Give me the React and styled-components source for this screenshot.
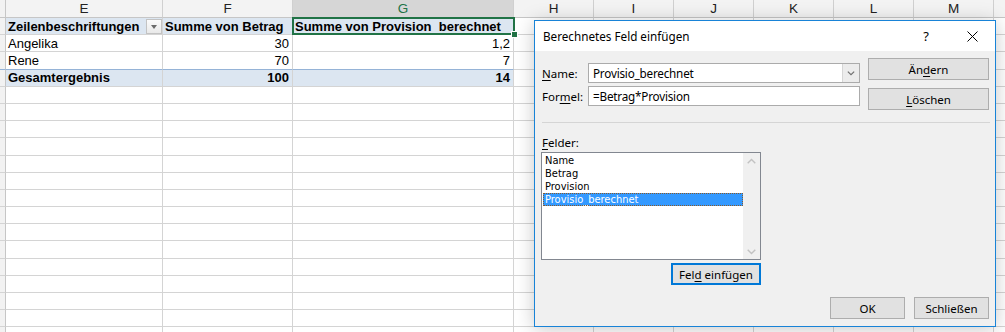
import React from 'react';
import styled, { createGlobalStyle } from 'styled-components';

const GlobalStyle = createGlobalStyle`
  html, body { margin: 0; padding: 0; background: #fff; }
  body { overflow: hidden; }
`;

const Sheet = styled.div`
  position: relative;
  width: 1005px;
  height: 332px;
  overflow: hidden;
  background: #fff;
  font-family: "Liberation Sans", Arial, sans-serif;
`;

const HeaderRow = styled.div`
  display: flex;
  height: 18px;
`;

const Corner = styled.div`
  flex: none;
  width: 6px;
  box-sizing: border-box;
  background: #f2f2f2;
  border-right: 1px solid #c6c6c6;
  border-bottom: 1px solid ${p => (p.$line ? p.$line : '#d4d4d4')};
`;

const ColHeader = styled.div`
  flex: none;
  width: ${p => p.$w}px;
  box-sizing: border-box;
  border-right: 1px solid #d0d0d0;
  border-bottom: 1px solid ${p => (p.$sel ? '#217346' : '#c6c6c6')};
  background: ${p => (p.$sel ? '#d6d6d6' : '#f3f3f3')};
  color: ${p => (p.$sel ? '#217346' : '#222')};
  font-size: 13.5px;
  display: flex;
  align-items: center;
  justify-content: center;
`;

const Row = styled.div`
  display: flex;
  height: 17.2px;
`;

const Cell = styled.div`
  flex: none;
  position: relative;
  width: ${p => p.$w}px;
  height: 100%;
  box-sizing: border-box;
  border-right: 1px solid #d4d4d4;
  border-bottom: 1px solid ${p => p.$line || '#d4d4d4'};
  background: ${p => p.$bg || '#fff'};
  font-weight: ${p => (p.$bold ? 700 : 400)};
  font-size: 13px;
  color: #000;
  display: flex;
  align-items: center;
  justify-content: ${p => (p.$right ? 'flex-end' : 'space-between')};
  padding: 0 3px 0 2px;
  white-space: nowrap;

  ${p =>
    p.$active &&
    `
    &::before {
      content: '';
      position: absolute;
      left: -1px;
      top: -1px;
      right: -2px;
      bottom: -1px;
      border: 2px solid #217346;
      z-index: 2;
      pointer-events: none;
    }
    &::after {
      content: '';
      position: absolute;
      right: -5px;
      bottom: -4px;
      width: 5px;
      height: 5px;
      background: #217346;
      border: 1px solid #fff;
      z-index: 3;
    }
  `}
`;

const CellText = styled.span`
  white-space: pre;
`;

const FilterButton = styled.div`
  flex: none;
  width: 16px;
  height: 15px;
  margin-right: -3px;
  box-sizing: border-box;
  border: 1px solid #c3c3c3;
  background: linear-gradient(#fbfbfb, #e9e9e9);
  display: flex;
  align-items: center;
  justify-content: center;

  &::after {
    content: '';
    border-left: 3.5px solid transparent;
    border-right: 3.5px solid transparent;
    border-top: 4px solid #6b6b6b;
    margin-top: 1px;
  }
`;

/* ---------- Dialog ---------- */

const Dialog = styled.div`
  position: absolute;
  left: 534px;
  top: 20px;
  width: 462px;
  height: 307px;
  box-sizing: border-box;
  border: 1px solid #1883d7;
  background: #f0f0f0;
  box-shadow: 0 2px 18px rgba(0, 0, 0, 0.22);
  display: flex;
  flex-direction: column;
  font-family: "Noto Sans", "Open Sans", sans-serif;
  font-size: 11.5px;
  color: #000;
  z-index: 10;
`;

const TitleBar = styled.div`
  flex: none;
  height: 30px;
  background: #fff;
  display: flex;
  align-items: center;
  padding-left: 8px;
`;

const Title = styled.div`
  flex: 1;
  font-size: 11.7px;
`;

const TitleButton = styled.div`
  width: 46px;
  height: 30px;
  display: flex;
  align-items: center;
  justify-content: center;
  font-size: 13px;
`;

const Body = styled.div`
  flex: 1;
  display: flex;
  flex-direction: column;
  padding: 7px 6px 8px 7px;
`;

const TopRow = styled.div`
  display: flex;
  justify-content: space-between;
`;

const Form = styled.div`
  margin-top: 5px;
  display: grid;
  grid-template-columns: 46px 272px;
  grid-auto-rows: 20px;
  row-gap: 3px;
  align-items: center;
`;

const Label = styled.label``;

const Accel = styled.span`
  text-decoration: underline;
  text-underline-offset: 2px;
`;

const Field = styled.div`
  height: 20px;
  box-sizing: border-box;
  border: 1px solid #ababab;
  background: #fff;
  display: flex;
  align-items: center;
  padding-left: 4px;
  font-size: 11.7px;
  letter-spacing: -0.2px;
`;

const FieldText = styled.span`
  flex: 1;
`;

const DropButton = styled.div`
  flex: none;
  width: 17px;
  height: 18px;
  box-sizing: border-box;
  border-left: 1px solid #d6d6d6;
  background: #ececec;
  display: flex;
  align-items: center;
  justify-content: center;
`;

const ButtonColumn = styled.div`
  display: flex;
  flex-direction: column;
  gap: 8px;
`;

const Button = styled.div`
  width: ${p => p.$w}px;
  height: 22px;
  box-sizing: border-box;
  border: ${p => (p.$primary ? '2px solid #0078d7' : '1px solid #adadad')};
  background: #e1e1e1;
  display: flex;
  align-items: center;
  justify-content: center;
`;

const ButtonLabel = styled.span`
  white-space: pre;
`;

const Separator = styled.div`
  margin-top: 12px;
  height: 1px;
  margin-right: -1px;
  background: #d5d5d5;
`;

const FieldsLabel = styled.div`
  margin-top: 12px;
  height: 15px;
  line-height: 15px;
`;

const ListArea = styled.div`
  margin-top: 2px;
  margin-left: -1px;
  width: 220px;
  display: flex;
  flex-direction: column;
  align-items: flex-end;
  gap: 3px;
`;

const ListBox = styled.div`
  width: 220px;
  height: 108px;
  box-sizing: border-box;
  border: 1px solid #828790;
  background: #fff;
  display: flex;
`;

const ListItems = styled.div`
  flex: 1;
  padding: 1px 0 0 1px;
  font-family: "DejaVu Sans Condensed", "DejaVu Sans", sans-serif;
  font-size: 11px;
`;

const ListItem = styled.div`
  height: 13px;
  line-height: 13px;
  padding-left: 2px;
  box-sizing: border-box;
  color: ${p => (p.$sel ? '#fff' : '#000')};
  background: ${p => (p.$sel ? '#3399ff' : 'transparent')};
  outline: ${p => (p.$sel ? '1px dotted #8a5a2a' : 'none')};
  outline-offset: -1px;
`;

const ScrollBar = styled.div`
  flex: none;
  width: 17px;
  background: #f0f0f0;
  display: flex;
  flex-direction: column;
  justify-content: space-between;
  align-items: center;
  padding: 5px 0 4px;
  box-sizing: border-box;
`;

const BottomRow = styled.div`
  margin-top: 12px;
  display: flex;
  justify-content: flex-end;
  gap: 9px;
`;

const Chevron = ({ up, color = '#c2c2c2', w = 9, h = 6 }) => (
  <svg width={w} height={h} viewBox="0 0 9 6">
    <path
      d={up ? 'M0.7 5.3 L4.5 1.5 L8.3 5.3' : 'M0.7 0.7 L4.5 4.5 L8.3 0.7'}
      fill="none"
      stroke={color}
      strokeWidth="1.4"
    />
  </svg>
);

const CloseIcon = () => (
  <svg width="11" height="11" viewBox="0 0 11 11">
    <path d="M0.5 0.5 L10.5 10.5 M10.5 0.5 L0.5 10.5" stroke="#000" strokeWidth="1" />
  </svg>
);

const columns = [
  { k: 'E', w: 157 },
  { k: 'F', w: 130 },
  { k: 'G', w: 221, sel: true },
  { k: 'H', w: 80 },
  { k: 'I', w: 80 },
  { k: 'J', w: 80 },
  { k: 'K', w: 80 },
  { k: 'L', w: 80 },
  { k: 'M', w: 80 },
  { k: '', w: 80 },
];

const PIVOT_BG = '#dce6f1';
const TOTAL_LINE = '#95b3d7';

const pivotRows = [
  { type: 'head', cells: ['Zeilenbeschriftungen', 'Summe von Betrag', 'Summe von Provision  berechnet'] },
  { type: 'data', cells: ['Angelika', '30', '1,2'] },
  { type: 'data', cells: ['Rene', '70', '7'], line: TOTAL_LINE },
  { type: 'total', cells: ['Gesamtergebnis', '100', '14'] },
];

const EMPTY_ROWS = 15;

function PivotRow({ row }) {
  const head = row.type === 'head';
  const total = row.type === 'total';
  const bg = head || total ? PIVOT_BG : undefined;
  const bold = head || total;
  return (
    <Row>
      <Corner $line={row.line} />
      {columns.map((c, i) => {
        if (i > 2) return <Cell key={i} $w={c.w} />;
        const right = !head && i > 0;
        return (
          <Cell
            key={i}
            $w={c.w}
            $bg={bg}
            $bold={bold}
            $right={right}
            $line={row.line}
            $active={head && i === 2}
          >
            <CellText>{row.cells[i]}</CellText>
            {head && i === 0 && <FilterButton />}
          </Cell>
        );
      })}
    </Row>
  );
}

export default function App() {
  return (
    <>
      <GlobalStyle />
      <Sheet>
        <HeaderRow>
          <Corner $line="#c6c6c6" />
          {columns.map((c, i) => (
            <ColHeader key={i} $w={c.w} $sel={c.sel}>
              {c.k}
            </ColHeader>
          ))}
        </HeaderRow>
        {pivotRows.map((r, i) => (
          <PivotRow key={i} row={r} />
        ))}
        {Array.from({ length: EMPTY_ROWS }).map((_, i) => (
          <Row key={'e' + i}>
            <Corner />
            {columns.map((c, j) => (
              <Cell key={j} $w={c.w} />
            ))}
          </Row>
        ))}

        <Dialog>
          <TitleBar>
            <Title>Berechnetes Feld einfügen</Title>
            <TitleButton>?</TitleButton>
            <TitleButton>
              <CloseIcon />
            </TitleButton>
          </TitleBar>
          <Body>
            <TopRow>
              <Form>
                <Label>
                  <Accel>N</Accel>ame:
                </Label>
                <Field>
                  <FieldText>Provisio_berechnet</FieldText>
                  <DropButton>
                    <Chevron color="#707070" w={8} h={5} />
                  </DropButton>
                </Field>
                <Label>
                  For<Accel>m</Accel>el:
                </Label>
                <Field>
                  <FieldText>=Betrag*Provision</FieldText>
                </Field>
              </Form>
              <ButtonColumn>
                <Button $w={121}>
                  <ButtonLabel>
                    Än<Accel>d</Accel>ern
                  </ButtonLabel>
                </Button>
                <Button $w={121}>
                  <ButtonLabel>
                    <Accel>L</Accel>öschen
                  </ButtonLabel>
                </Button>
              </ButtonColumn>
            </TopRow>
            <Separator />
            <FieldsLabel>
              <Accel>F</Accel>elder:
            </FieldsLabel>
            <ListArea>
              <ListBox>
                <ListItems>
                  <ListItem>Name</ListItem>
                  <ListItem>Betrag</ListItem>
                  <ListItem>Provision</ListItem>
                  <ListItem $sel>Provisio_berechnet</ListItem>
                </ListItems>
                <ScrollBar>
                  <Chevron up />
                  <Chevron />
                </ScrollBar>
              </ListBox>
              <Button $w={90} $primary>
                <ButtonLabel>
                  Fel<Accel>d</Accel> einfügen
                </ButtonLabel>
              </Button>
            </ListArea>
            <BottomRow>
              <Button $w={75}>
                <ButtonLabel>OK</ButtonLabel>
              </Button>
              <Button $w={75}>
                <ButtonLabel>Schließen</ButtonLabel>
              </Button>
            </BottomRow>
          </Body>
        </Dialog>
      </Sheet>
    </>
  );
}
